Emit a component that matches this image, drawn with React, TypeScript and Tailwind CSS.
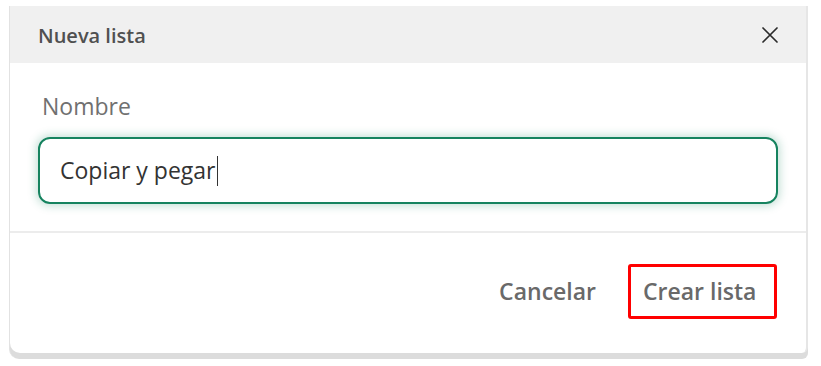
import React from "react";

export default function App() {
  return (
    <div className="w-[821px] h-[366px] bg-white pt-[6px] pl-[9px]" style={{ fontFamily: '"Open Sans", "Noto Sans", sans-serif' }}>
      <div className="w-[799px] h-[353px] bg-[#dcdcdc] rounded-bl-[10px] rounded-br-[6px] flex flex-col pb-[6px] border-l border-[#e2e2e2]">
        <div className="flex-1 bg-white rounded-bl-[10px] rounded-br-[6px] border-r-2 border-[#e6e6e6] flex flex-col overflow-hidden">
          <div className="h-[57px] shrink-0 bg-[#f0f0f0] flex items-center justify-between pl-[28px] pr-[27px]">
            <span className="text-[20px] font-semibold text-[#505050] leading-none pt-[2px]">Nueva lista</span>
            <svg width="18" height="18" viewBox="0 0 18 18">
              <path d="M2 2 L16 16 M16 2 L2 16" stroke="#2b2b2b" strokeWidth="1.7" strokeLinecap="round" />
            </svg>
          </div>
          <div className="px-[28px] pt-[28px]">
            <div className="text-[23px] text-[#707070] leading-[30px] pl-[4px]">Nombre</div>
            <div className="mt-[16px] h-[67px] rounded-[12px] border-2 border-[#16835f] shadow-[0_0_8px_2px_rgba(22,131,95,0.25)] flex items-center pl-[20px]">
              <span className="text-[23px] text-[#333333] leading-none">Copiar y pegar</span>
              <span className="w-[1.5px] h-[30px] bg-[#333333] ml-[1px]"></span>
            </div>
          </div>
          <div className="mt-[27px] h-[2px] bg-[#ececec]"></div>
          <div className="flex-1 flex items-center justify-end pr-[29px] pb-[4px] gap-[32px]">
            <span className="text-[23px] font-semibold text-[#696969]">Cancelar</span>
            <div className="h-[55px] w-[149px] border-[3px] border-[#ff0000] rounded-[3px] flex items-center pl-[12px]">
              <span className="text-[23px] font-semibold text-[#696969]">Crear lista</span>
            </div>
          </div>
        </div>
      </div>
    </div>
  );
}
